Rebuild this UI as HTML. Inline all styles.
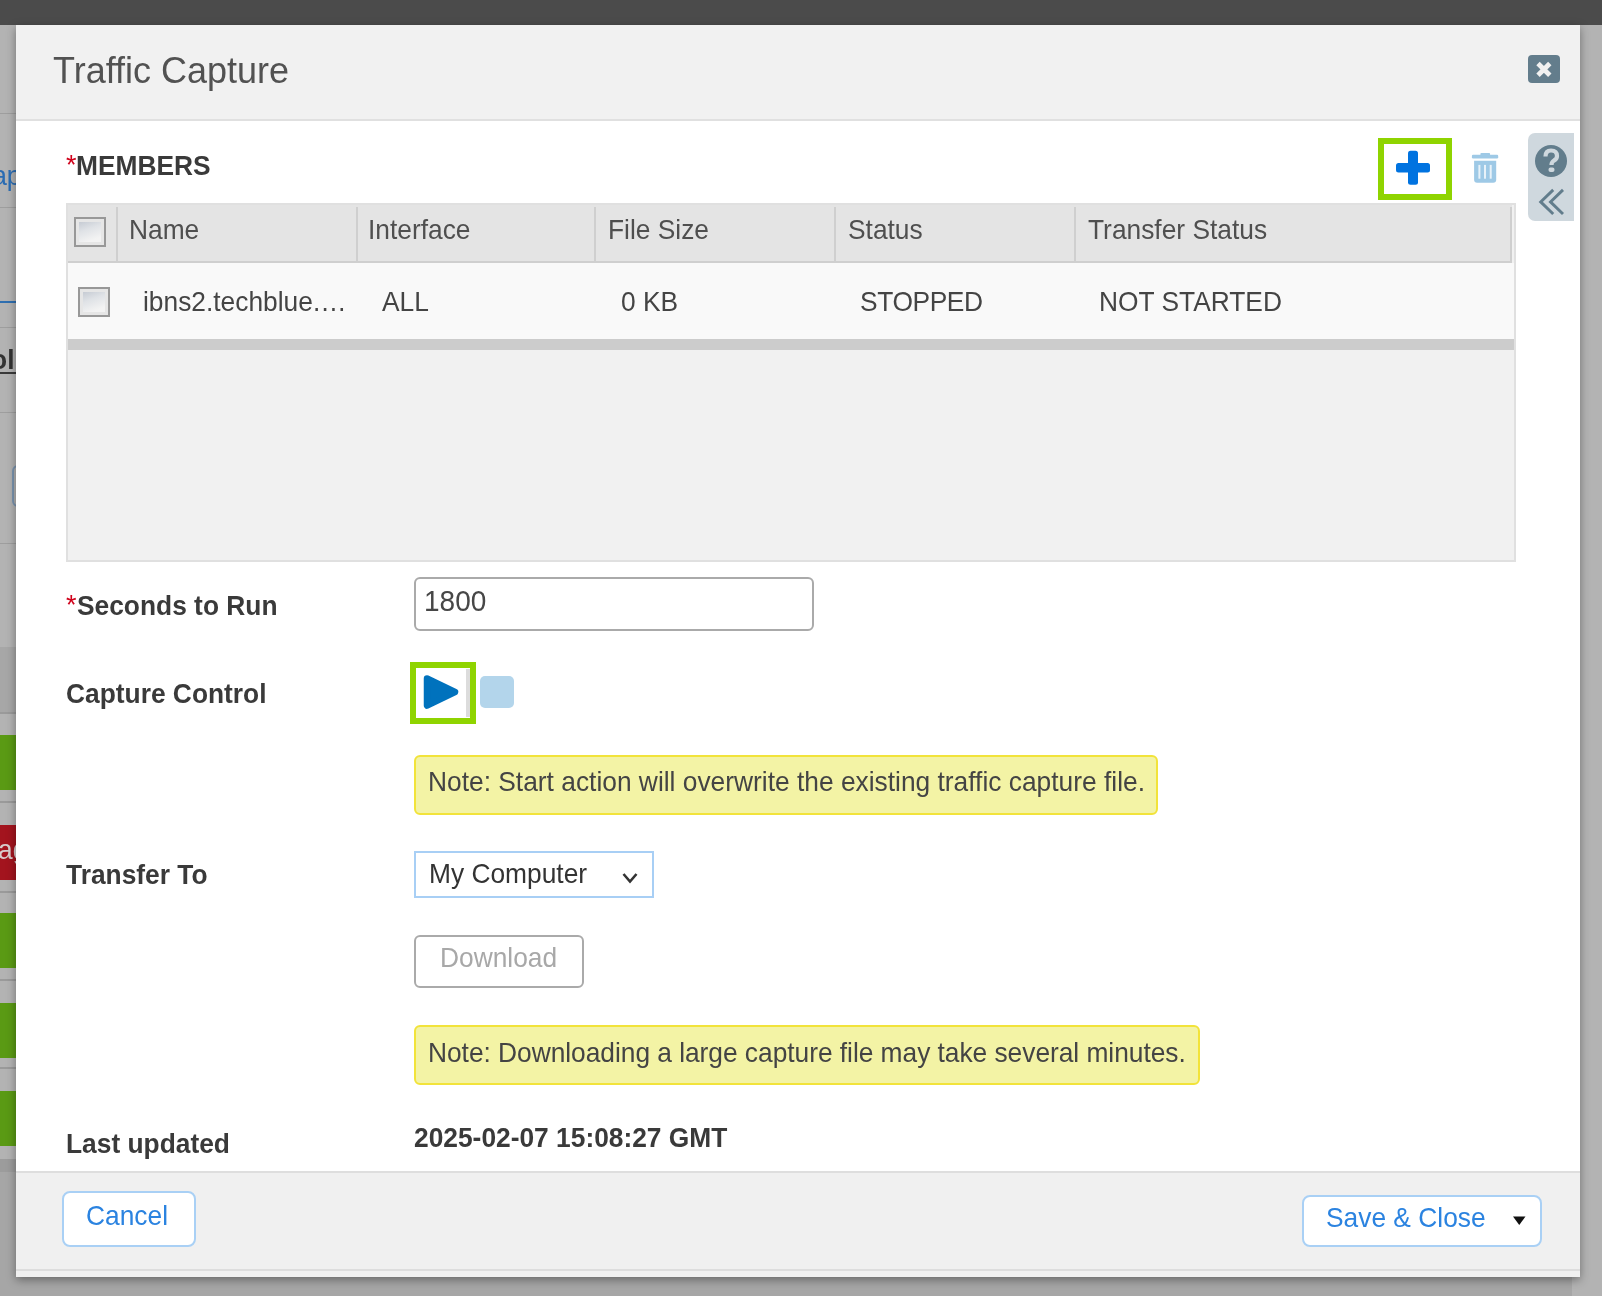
<!DOCTYPE html>
<html><head><meta charset="utf-8">
<style>
*{margin:0;padding:0;box-sizing:border-box}
html,body{width:1602px;height:1296px;overflow:hidden;background:#b3b3b3;font-family:"Liberation Sans",sans-serif}
.t{will-change:transform}
.a{position:absolute}
.t{position:absolute;white-space:nowrap;font-size:26.35px;line-height:26px;color:#333;transform:scaleY(1.05);transform-origin:0 22px}
.b{font-weight:bold}
#topbar{left:0;top:0;width:1602px;height:25px;background:#4b4b4b}
#modal{left:16px;top:25px;width:1564px;height:1252px;background:#fff;box-shadow:0 3px 9px rgba(0,0,0,.38)}
#hdr{left:16px;top:25px;width:1564px;height:96px;background:#f1f1f1;border-bottom:2px solid #e0e0e0}
.req{color:#d0021b}
.cb{width:32px;height:30px;border:2px solid #989898;box-shadow:inset 0 0 0 3px #e6e6e6;background:linear-gradient(160deg,#bcc2cc 0%,#dfe2e6 40%,#f3f3f3 75%)}
</style></head><body>
<!-- background page strip -->
<div class="a" id="bgpage" style="left:0;top:25px;width:40px;height:1271px;background:#b3b3b3;overflow:hidden">
<div class="a" style="left:0;top:88px;width:40px;height:1px;background:#9e9e9e"></div>
<div class="t" style="left:-21px;top:138px;color:#2a6cb3">cap</div>
<div class="a" style="left:0;top:182px;width:40px;height:1px;background:#9e9e9e"></div>
<div class="a" style="left:0;top:276px;width:40px;height:2px;background:#2f6fb0"></div>
<div class="a" style="left:0;top:302px;width:40px;height:1px;background:#9e9e9e"></div>
<div class="t b" style="left:-25px;top:321.5px;color:#333">ool</div>
<div class="a" style="left:0;top:347px;width:16px;height:2px;background:#3a3a3a"></div>
<div class="a" style="left:0;top:387px;width:40px;height:1px;background:#9e9e9e"></div>
<div class="a" style="left:12px;top:440px;width:20px;height:42px;border:2px solid #7a94b0;border-radius:6px"></div>
<div class="a" style="left:0;top:518px;width:40px;height:1px;background:#9e9e9e"></div>
<div class="a" style="left:0;top:622px;width:40px;height:65px;background:#a7a7a7"></div>
<div class="a" style="left:0;top:687px;width:40px;height:2px;background:#9a9a9a"></div>
<div class="a" style="left:0;top:710px;width:40px;height:55px;background:#5a9a14"></div>
<div class="a" style="left:0;top:776px;width:40px;height:2px;background:#9a9a9a"></div>
<div class="a" style="left:0;top:800px;width:40px;height:55px;background:#a3141e"></div>
<div class="t" style="left:-2px;top:811.5px;color:#d8cccc">ag</div>
<div class="a" style="left:0;top:866px;width:40px;height:2px;background:#9a9a9a"></div>
<div class="a" style="left:0;top:888px;width:40px;height:55px;background:#5a9a14"></div>
<div class="a" style="left:0;top:954px;width:40px;height:2px;background:#9a9a9a"></div>
<div class="a" style="left:0;top:978px;width:40px;height:55px;background:#5a9a14"></div>
<div class="a" style="left:0;top:1042px;width:40px;height:2px;background:#9a9a9a"></div>
<div class="a" style="left:0;top:1066px;width:40px;height:55px;background:#5a9a14"></div>
<div class="a" style="left:0;top:1134px;width:40px;height:13px;background:#9c9c9c"></div>
<div class="a" style="left:0;top:1147px;width:40px;height:130px;background:#a6a6a6"></div>
<div class="a" style="left:0;top:1212px;width:40px;height:1px;background:#969696"></div>
</div>
<div class="a" style="left:0;top:1172px;width:1572px;height:124px;background:#a6a6a6"></div>
<div class="a" id="topbar"></div>

<div class="a" id="modal"></div>
<div class="a" id="hdr"></div>
<div class="t" style="left:53px;top:53px;font-size:36px;line-height:36px;color:#525252;transform:scaleY(1.045);transform-origin:0 30.5px">Traffic Capture</div>
<div class="a" style="left:1528px;top:55px;width:32px;height:28px;background:#637d8c;border-radius:4px"></div>
<svg class="a" style="left:1528px;top:55px" width="32" height="28" viewBox="0 0 32 28"><path d="M10 8.5 L21.8 20.2 M21.8 8.5 L10 20.2" stroke="#f1f1f1" stroke-width="4.8" stroke-linecap="butt"/></svg>

<!-- members -->
<div class="t req" style="left:65.8px;top:151.5px;font-size:27px">*</div>
<div class="t b" style="left:76px;top:153px;color:#3a3a3a">MEMBERS</div>

<!-- toolbar icons -->
<div class="a" style="left:1378px;top:138px;width:74px;height:62px;border:6px solid #8fd400"></div>
<svg class="a" style="left:1396px;top:150px" width="34" height="36" viewBox="0 0 34 36"><rect x="12" y="0.7" width="10" height="34.1" rx="2.5" fill="#0073e0"/><rect x="0" y="12.9" width="34" height="9.7" rx="2.5" fill="#0073e0"/></svg>
<svg class="a" style="left:1470px;top:150px" width="30" height="36" viewBox="0 0 30 36">
<rect x="1.9" y="4.8" width="26.3" height="3.6" rx="1.2" fill="#9ec9e6"/><rect x="10.4" y="3" width="9.7" height="2.5" rx="1" fill="#9ec9e6"/>
<path d="M4.1 10.8 H26.2 V29.8 Q26.2 32.8 23.2 32.8 H7.1 Q4.1 32.8 4.1 29.8 Z" fill="#9ec9e6"/>
<rect x="8.4" y="14.9" width="2" height="13.8" fill="#e8f2f9"/><rect x="14" y="14.9" width="2" height="13.8" fill="#e8f2f9"/><rect x="19.7" y="14.9" width="2" height="13.8" fill="#e8f2f9"/>
</svg>
<div class="a" style="left:1528px;top:133px;width:46px;height:88px;background:#cfd8de;border-radius:7px 0 0 7px"></div>
<svg class="a" style="left:1528px;top:133px" width="46" height="88" viewBox="0 0 46 88">
<circle cx="23" cy="28" r="16" fill="#627d8c"/>
<path d="M17.5 23.5 Q17.5 17.5 23 17.5 Q29 17.5 29 23 Q29 26 26 27.5 Q23.5 29 23.5 32" fill="none" stroke="#cfd8de" stroke-width="4.2"/>
<rect x="20.5" y="34.5" width="6" height="4.5" rx="2" fill="#cfd8de"/>
<path d="M25.2 56.9 L12.7 68.9 L25.2 81 M35 56.9 L22.5 68.9 L35 81" fill="none" stroke="#627d8c" stroke-width="2.9" stroke-linecap="butt" stroke-linejoin="miter"/>
</svg>

<!-- table -->
<div class="a" style="left:66px;top:203px;width:1450px;height:359px;border:2px solid #e0e0e0;background:#f1f1f1"></div>
<div class="a" style="left:68px;top:205px;width:1444px;height:58px;background:#e4e4e4;border-bottom:2px solid #cfcfcf"></div>
<div class="a" style="left:68px;top:263px;width:1446px;height:76px;background:#f9f9f9"></div>
<div class="a" style="left:68px;top:339px;width:1446px;height:11px;background:#cccccc"></div>

<div class="a" style="left:116px;top:207px;width:2px;height:54px;background:#cfcfcf"></div>
<div class="a" style="left:356px;top:207px;width:2px;height:54px;background:#cfcfcf"></div>
<div class="a" style="left:594px;top:207px;width:2px;height:54px;background:#cfcfcf"></div>
<div class="a" style="left:834px;top:207px;width:2px;height:54px;background:#cfcfcf"></div>
<div class="a" style="left:1074px;top:207px;width:2px;height:54px;background:#cfcfcf"></div>
<div class="a" style="left:1510px;top:207px;width:2px;height:54px;background:#cfcfcf"></div>
<div class="a cb" style="left:74px;top:217px"></div>
<div class="a cb" style="left:78px;top:287px"></div>
<div class="t" style="left:129px;top:217px;color:#4f4f4f">Name</div>
<div class="t" style="left:368px;top:217px;color:#4f4f4f">Interface</div>
<div class="t" style="left:608px;top:217px;color:#4f4f4f">File Size</div>
<div class="t" style="left:848px;top:217px;color:#4f4f4f">Status</div>
<div class="t" style="left:1088px;top:217px;color:#4f4f4f">Transfer Status</div>

<div class="t" style="left:142.5px;top:289px;color:#444">ibns2.techblue.…</div>
<div class="t" style="left:382px;top:289px;color:#444">ALL</div>
<div class="t" style="left:621px;top:289px;color:#444">0 KB</div>
<div class="t" style="left:860px;top:289px;color:#444;letter-spacing:-0.4px">STOPPED</div>
<div class="t" style="left:1099px;top:289px;color:#444">NOT STARTED</div>

<!-- form -->
<div class="t req" style="left:65.8px;top:591.5px;font-size:27px">*</div>
<div class="t b" style="left:77px;top:593px;color:#3a3a3a">Seconds to Run</div>
<div class="a" style="left:414px;top:577px;width:400px;height:54px;border:2px solid #aaa;border-radius:6px"></div>
<div class="t" style="left:423.5px;top:589px;font-size:28px;color:#474747;transform-origin:0 22.5px">1800</div>

<div class="t b" style="left:66px;top:681px;color:#3a3a3a">Capture Control</div>
<div class="a" style="left:410px;top:662px;width:66px;height:62px;border:6px solid #8fd400;background:#fff"></div>
<div class="a" style="left:466px;top:669px;width:4px;height:48px;background:#dcdcdc"></div>
<svg class="a" style="left:410px;top:662px" width="66" height="62" viewBox="0 0 66 62"><polygon points="17,16.5 45,30 17,43.5" fill="#0072bd" stroke="#0072bd" stroke-width="6.5" stroke-linejoin="round"/></svg>
<div class="a" style="left:480px;top:676px;width:34px;height:32px;background:#b3d5eb;border-radius:5px"></div>

<div class="a" style="left:414px;top:755px;width:744px;height:60px;border:2px solid #f2e33a;background:#f3f3a5;border-radius:6px"></div>
<div class="t" style="left:428px;top:769px;color:#444">Note: Start action will overwrite the existing traffic capture file.</div>

<div class="t b" style="left:66px;top:862px;color:#3a3a3a">Transfer To</div>
<div class="a" style="left:414px;top:851px;width:240px;height:47px;border:2px solid #a8cff5;background:#fff"></div>
<div class="t" style="left:428.5px;top:861px;color:#333">My Computer</div>
<svg class="a" style="left:619px;top:868px" width="22" height="20" viewBox="0 0 22 20"><path d="M4.5 6 L11 13.5 L17.5 6" fill="none" stroke="#333" stroke-width="2.6"/></svg>

<div class="a" style="left:414px;top:935px;width:170px;height:53px;border:2px solid #aaa;border-radius:6px;background:#fff"></div>
<div class="t" style="left:440px;top:945px;color:#a8a8a8">Download</div>

<div class="a" style="left:414px;top:1025px;width:786px;height:60px;border:2px solid #f2e33a;background:#f3f3a5;border-radius:6px"></div>
<div class="t" style="left:428px;top:1040px;color:#444;letter-spacing:-0.035px">Note: Downloading a large capture file may take several minutes.</div>

<div class="t b" style="left:66px;top:1131px;color:#3a3a3a">Last updated</div>
<div class="t b" style="left:414px;top:1125px;color:#3a3a3a">2025-02-07 15:08:27 GMT</div>

<!-- footer -->
<div class="a" style="left:16px;top:1171px;width:1564px;height:106px;background:#f0f0f0;border-top:2px solid #dedede"></div>
<div class="a" style="left:16px;top:1269px;width:1564px;height:2px;background:#dddddd"></div>
<div class="a" style="left:62px;top:1191px;width:134px;height:56px;border:2px solid #a9d0f5;border-radius:8px;background:#fff"></div>
<div class="t" style="left:86px;top:1203px;color:#2b83e0">Cancel</div>
<div class="a" style="left:1302px;top:1195px;width:240px;height:52px;border:2px solid #a9d0f5;border-radius:8px;background:#fff"></div>
<div class="t" style="left:1326px;top:1205px;color:#2b83e0">Save &amp; Close</div>
<svg class="a" style="left:1510px;top:1212px" width="20" height="18" viewBox="0 0 20 18"><path d="M3 4.5 H15.5 L9.25 13 Z" fill="#111"/></svg>

</body></html>
